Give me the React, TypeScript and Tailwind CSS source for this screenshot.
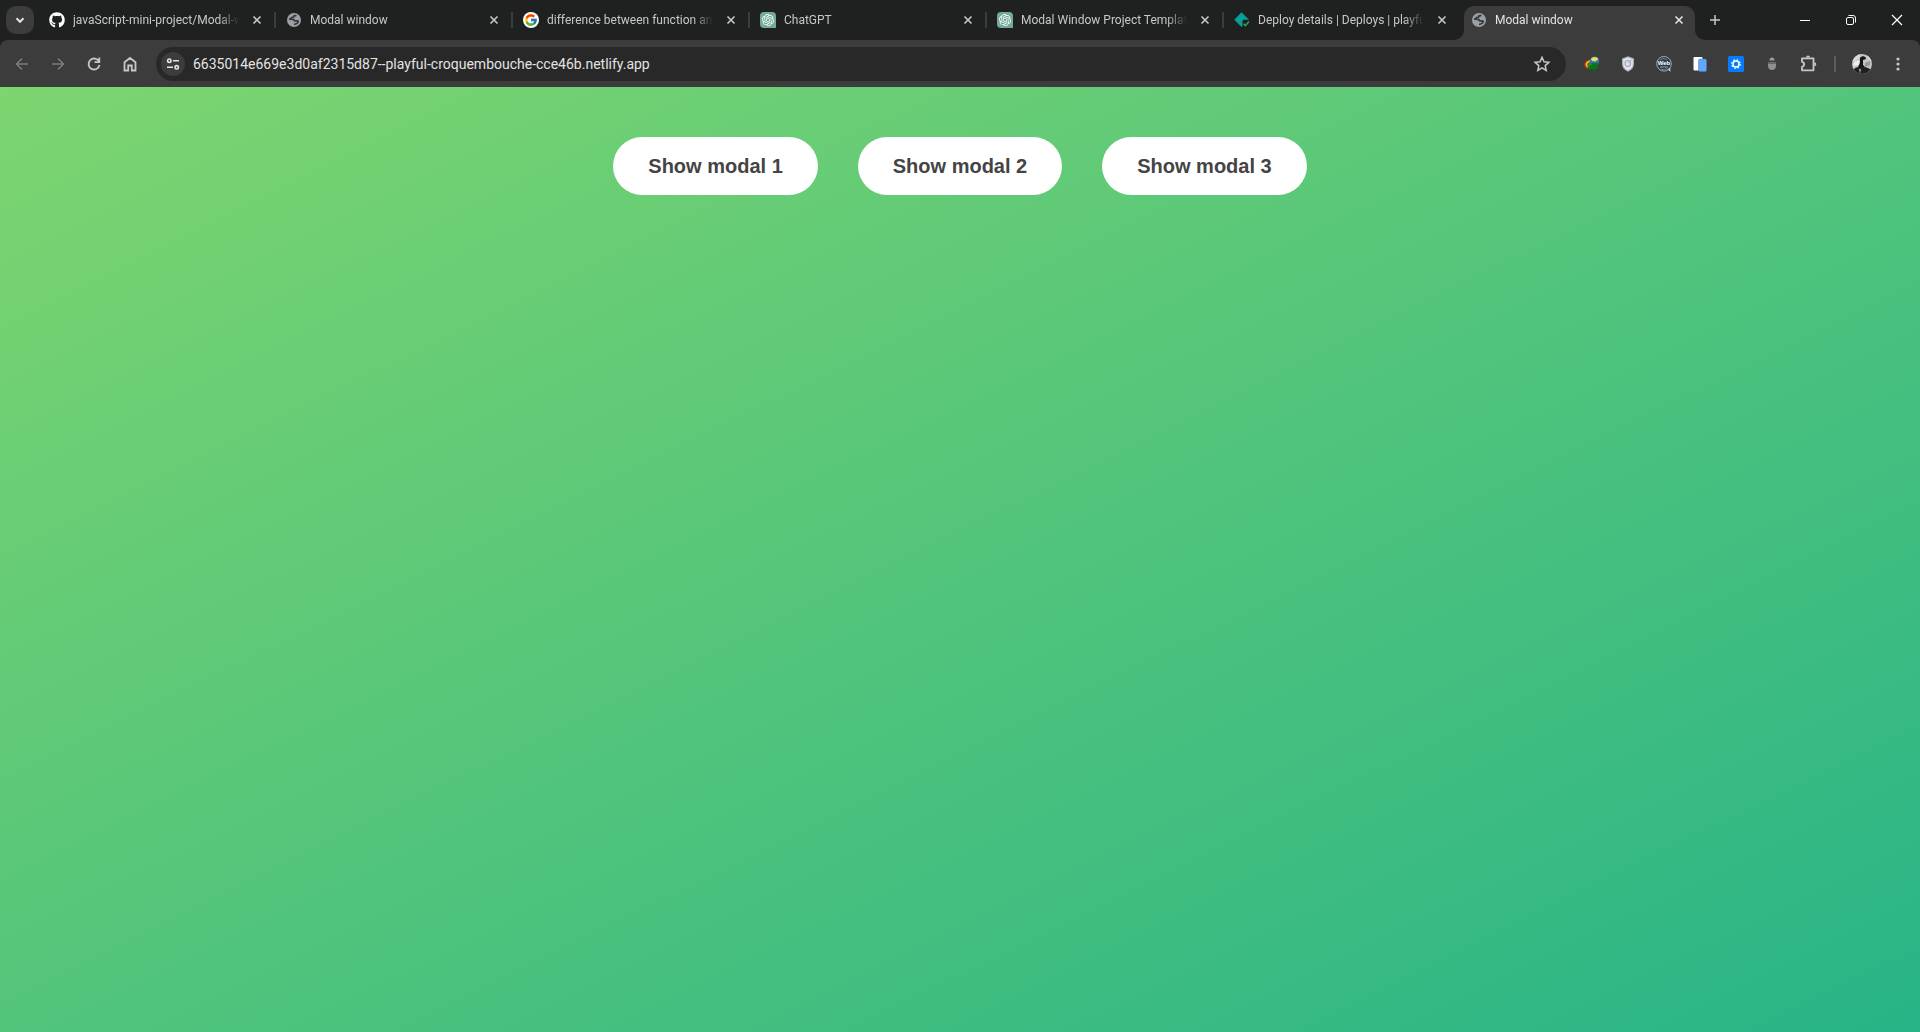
import { useState } from "react";
import type { ReactNode } from "react";
import { FaGithub } from "react-icons/fa";
import { FcGoogle } from "react-icons/fc";
import { SiOpenai } from "react-icons/si";

const Globe = () => (
  <svg viewBox="0 0 16 16" className="size-4 shrink-0" aria-hidden="true">
    <circle cx="8" cy="8" r="7" fill="#9aa0a6" />
    <path
      d="M10.500 3.800C8.500 3.300 7.300 4 7.400 5.300 5.500 5 4.800 6 5 7.200H3M5.500 7.500c2-.400 3 .300 3.200 1.500 1.300.200 3.300-.800 3.500.400.100 1.200-2 3-4.200 2.900"
      fill="none"
      stroke="#363737"
      strokeWidth="1.700"
    />
  </svg>
);

const GitHub = () => <FaGithub className="size-4 shrink-0 text-white" aria-hidden="true" />;

const Google = () => (
  <span className="flex size-4 shrink-0 items-center justify-center rounded-full bg-white">
    <FcGoogle className="size-3.5" aria-hidden="true" />
  </span>
);

const OpenAI = () => (
  <span className="flex size-4 shrink-0 items-center justify-center rounded-sm rounded-br-none bg-[#74aa9c]">
    <SiOpenai className="size-3 text-white" aria-hidden="true" />
  </span>
);

const Netlify = () => (
  <svg viewBox="0 0 16 16" className="size-4 shrink-0" aria-hidden="true">
    <path d="M7.500.300 15 7.800H9.500l-1 1v5L7.500 15 .300 7.800z" fill="#05a09c" />
    <path d="M9.600 11.700l1.800 2 3.600-4.200" fill="none" stroke="#2fa84f" strokeWidth="1.500" />
  </svg>
);

const Cross = () => (
  <svg viewBox="0 0 16 16" className="size-4" fill="none" stroke="currentColor" strokeWidth="1.600" aria-hidden="true">
    <path d="M4.500 4.500l7 7M11.500 4.500l-7 7" />
  </svg>
);

type TabData = { title: string; icon: ReactNode };

const tabs: TabData[] = [
  { title: "javaScript-mini-project/Modal-window", icon: <GitHub /> },
  { title: "Modal window", icon: <Globe /> },
  { title: "difference between function and", icon: <Google /> },
  { title: "ChatGPT", icon: <OpenAI /> },
  { title: "Modal Window Project Template", icon: <OpenAI /> },
  { title: "Deploy details | Deploys | playful", icon: <Netlify /> },
  { title: "Modal window", icon: <Globe /> },
];

const Flare = () => (
  <svg viewBox="0 0 10 10" className="size-2.5" aria-hidden="true">
    <path d="M10 0v10H0A10 10 0 0 0 10 0z" fill="#3c3c3c" />
  </svg>
);

function Tab({ tab, active, divider }: { tab: TabData; active: boolean; divider: boolean }) {
  return (
    <div className="relative flex min-w-0 flex-1 px-[3px] pt-1.5">
      <div
        className={
          active
            ? "relative flex min-w-0 flex-1 items-center rounded-t-[10px] bg-[#3c3c3c] pb-1.5 pl-[7px] pr-2 text-[#e3e3e3]"
            : "relative flex min-w-0 flex-1 items-center pb-1.5 pl-[7px] pr-2 text-[#c7c7c7]"
        }
      >
        {tab.icon}
        <button
          type="button"
          className="ml-2 min-w-0 flex-1 overflow-hidden whitespace-nowrap text-left text-xs leading-4 [mask-image:linear-gradient(to_right,#000_calc(100%_-_20px),transparent)]"
        >
          {tab.title}
        </button>
        <button type="button" aria-label="Close tab" className="ml-2.5">
          <Cross />
        </button>
        {active && (
          <>
            <span className="absolute bottom-0 -left-2.5">
              <Flare />
            </span>
            <span className="absolute bottom-0 -right-2.5 -scale-x-100">
              <Flare />
            </span>
          </>
        )}
      </div>
      {divider && <span className="absolute top-3 right-0 h-4 w-0.5 bg-[#3c3c3c]" />}
    </div>
  );
}

function TabStrip() {
  return (
    <div className="flex h-10 items-stretch bg-[#1f2120] pl-1.5">
      <button
        type="button"
        aria-label="Search tabs"
        className="mt-1.5 mr-[5px] flex size-7 items-center justify-center rounded-[10px] bg-[#3c3c3c] text-[#e3e3e3]"
      >
        <svg viewBox="0 0 16 16" className="size-4" fill="none" stroke="currentColor" strokeWidth="2" aria-hidden="true">
          <path d="M4.500 6.300 8 9.800l3.500-3.500" />
        </svg>
      </button>
      <div className="flex max-w-[1659px] min-w-0 flex-1">
        {tabs.map((tab, i) => (
          <Tab key={i} tab={tab} active={i === tabs.length - 1} divider={i < tabs.length - 2} />
        ))}
      </div>
      <button type="button" aria-label="New tab" className="ml-[3px] flex w-7 items-center justify-center text-[#c7c7c7]">
        <svg viewBox="0 0 16 16" className="size-4" fill="none" stroke="currentColor" strokeWidth="1.500" aria-hidden="true">
          <path d="M8 3v10M3 8h10" />
        </svg>
      </button>
      <div className="ml-auto flex text-white">
        <button type="button" aria-label="Minimize" className="flex w-[46px] items-center justify-center">
          <svg viewBox="0 0 12 12" className="size-3" fill="none" stroke="currentColor" aria-hidden="true">
            <path d="M1 6.500h10" />
          </svg>
        </button>
        <button type="button" aria-label="Restore" className="flex w-[46px] items-center justify-center">
          <svg viewBox="0 0 12 12" className="size-3" fill="none" stroke="currentColor" aria-hidden="true">
            <rect x="1.500" y="3.500" width="7" height="7" rx="1.500" />
            <path d="M3.500 1.500H8A2.500 2.500 0 0 1 10.500 4v4.500" />
          </svg>
        </button>
        <button type="button" aria-label="Close" className="flex w-[46px] items-center justify-center">
          <svg viewBox="0 0 12 12" className="size-3" fill="none" stroke="currentColor" strokeWidth="1.200" aria-hidden="true">
            <path d="M1 1l10 10M11 1 1 11" />
          </svg>
        </button>
      </div>
    </div>
  );
}

function IconButton({ label, dim, children }: { label: string; dim?: boolean; children: ReactNode }) {
  return (
    <button
      type="button"
      aria-label={label}
      className={
        dim
          ? "flex size-9 shrink-0 items-center justify-center text-[#7c7c7c]"
          : "flex size-9 shrink-0 items-center justify-center text-[#c7c7c7]"
      }
    >
      <svg viewBox="0 0 16 16" className="size-4 overflow-visible" fill="none" stroke="currentColor" strokeWidth="1.600" aria-hidden="true">
        {children}
      </svg>
    </button>
  );
}

function Extensions() {
  return (
    <div className="flex shrink-0 items-center">
      <IconButton label="Download manager">
        <g stroke="none">
          <path d="M7 3.500C2.500 3.500 0 6 .200 9l1.300 3 2 .800L8 8z" fill="#c9301c" />
          <path d="M7 4.600C3.500 4.600 1.500 6.500 1.600 9l1.700 2.800L8 8z" fill="#efc314" />
          <path d="M7 5.800C4.500 5.800 3.200 7.300 3.200 9.300L4.500 11.500 8 9z" fill="#2a8a2f" />
          <circle cx="10.500" cy="5.300" r="4.700" fill="#3a6db4" />
          <path d="M6.800 3.200C8.500.200 13 .200 14.400 3l-2.900 2.600-3.300-.600z" fill="#dfe069" />
          <path d="M3.500 11.500 8 8.500 7.500 7 16 7.300 12.800 10l1.700 1.500-5 3.500-.500-2-4.500.700z" fill="#0c7410" />
        </g>
      </IconButton>
      <IconButton label="Security shield">
        <g stroke="none">
          <path d="M8 .300 14 2.500v5c0 4-2.300 6.500-6 8.200-3.700-1.700-6-4.200-6-8.200v-5z" fill="#a9b0bb" />
          <path d="M8 1.500 12.800 3.300v4.400c0 3.100-1.700 5.200-4.800 6.700-3.100-1.500-4.800-3.600-4.800-6.700V3.300z" fill="#e2e5ea" />
        </g>
        <circle cx="7.800" cy="7.500" r="2.800" stroke="#a2a9b5" strokeWidth="1.200" />
        <path d="M8 7.500 12 3.500" stroke="#a2a9b5" strokeWidth="1" />
      </IconButton>
      <IconButton label="Web tools">
        <circle cx="8" cy="7.800" r="7.300" fill="#303b51" stroke="#a4a8b2" strokeWidth="1" />
        <path d="M11.500 13.500l3 2.200-.200-4z" fill="#c7c9ce" stroke="none" />
        <path d="M4 4 7 2.500l4 1M4.500 13l4 1 3-2" stroke="#5d8795" strokeWidth="1" />
        <text x="8" y="9" textAnchor="middle" fontSize="6" fontWeight="700" fill="#fff" stroke="none" fontFamily="Liberation Sans, sans-serif">
          Web
        </text>
        <path d="M4 11h8" stroke="#929aaa" strokeWidth="1" />
      </IconButton>
      <IconButton label="Reader">
        <g stroke="none">
          <rect x="1.500" y="1" width="9" height="13.500" rx="1" fill="#fff" />
          <rect x="6.500" y="3" width="8" height="12.500" rx="1.500" fill="#63a7fa" stroke="#3f7dcc" strokeWidth=".500" />
        </g>
      </IconButton>
      <IconButton label="Settings extension">
        <rect width="16" height="16" rx="1.500" fill="#087cff" stroke="none" />
        <circle cx="8" cy="8" r="3" stroke="#fff" strokeWidth="1.500" />
        <circle cx="8" cy="8" r="4.200" stroke="#fff" strokeWidth="1.300" strokeDasharray="1.700 1.599" />
      </IconButton>
      <IconButton label="Incognito helper">
        <g stroke="none">
          <path d="M5.500 4.500C5.500 2.300 6.500 1.500 8 1.500s2.500.800 2.500 3z" fill="#9b9b9b" />
          <path d="M4 6h8v3.500C12 12.500 10.500 14 8 14s-4-1.500-4-4.500z" fill="#8e8e8e" />
          <path d="M4 6h8v2H4z" fill="#686868" />
        </g>
      </IconButton>
      <IconButton label="Extensions">
        <path d="M2 2.300H13.500V14.300H2V10.800C4.800 10.300 4.800 6.300 2 5.800z" strokeWidth="1.800" strokeLinejoin="round" />
        <path d="M6 1.600a2 2 0 0 1 4 0zM14.300 6.300a2 2 0 0 1 0 4z" fill="currentColor" stroke="none" />
      </IconButton>
    </div>
  );
}

function Toolbar() {
  const [url, setUrl] = useState("6635014e669e3d0af2315d87--playful-croquembouche-cce46b.netlify.app");
  return (
    <div className="bg-[#1f2120]">
      <div className="flex h-[47px] items-center rounded-t-lg bg-[#3c3c3c] pl-1 pr-1">
        <IconButton label="Back" dim>
          <path d="M14 8H3M8 2.500 2.500 8 8 13.500" />
        </IconButton>
        <IconButton label="Forward" dim>
          <path d="M2 8h11M8 2.500 13.500 8 8 13.500" />
        </IconButton>
        <IconButton label="Reload">
          <path d="M13 5.500A5.500 5.500 0 1 0 13.500 9M13.300 1.500v4.700H8.500" strokeWidth="1.800" />
        </IconButton>
        <IconButton label="Home">
          <path d="M2.500 6.300 8 2l5.500 4.300v8.200H9.800v-5H6.200v5H2.500z" strokeWidth="1.800" />
        </IconButton>
        <div className="ml-2 flex h-[34px] min-w-0 flex-1 items-center rounded-full bg-[#282828] pl-[5px] pr-1.5">
          <button
            type="button"
            aria-label="View site information"
            className="flex size-6 shrink-0 items-center justify-center rounded-full bg-[#3c3c3c] text-[#e3e3e3]"
          >
            <svg viewBox="0 0 14 14" className="size-3.5" fill="none" stroke="currentColor" strokeWidth="1.600" aria-hidden="true">
              <circle cx="3.300" cy="3.700" r="1.700" />
              <path d="M7 3.700h6M1 10.300h6" />
              <circle cx="10.700" cy="10.300" r="1.700" />
            </svg>
          </button>
          <input
            type="text"
            aria-label="Address"
            value={url}
            onChange={(e) => setUrl(e.target.value)}
            className="ml-2 min-w-0 flex-1 bg-transparent text-sm leading-5 text-[#e3e3e3] outline-none"
          />
          <IconButton label="Bookmark this tab">
            <path d="M8 1.300 10 5.800l4.900.500-3.700 3.300 1 4.800L8 11.900l-4.200 2.500 1-4.800L1.100 6.300 6 5.800z" strokeWidth="1.500" />
          </IconButton>
        </div>
        <div className="w-2" />
        <Extensions />
        <span className="mx-2 h-4 w-0.5 shrink-0 bg-[#5c5c5c]" />
        <button type="button" aria-label="Profile" className="flex size-9 shrink-0 items-center justify-center">
          <svg viewBox="0 0 20 20" className="size-5 rounded-full" aria-hidden="true">
            <rect width="20" height="20" fill="#c4c4c4" />
            <path d="M0 0h9L6 5 0 8zM14 0h6v8l-4-3z" fill="#dcdcdc" />
            <path d="M2 8l5-2v5l-6 1z" fill="#eee" />
            <path d="M8 4c2-3 6-2 6 1l-3 1v5l2 2H6l2-4z" fill="#151515" />
            <path d="M2 15c3-3 11-3 16 0l-1 5H3z" fill="#202020" />
            <path d="M7 15l1 5 1-5z" fill="#a8a8a8" />
            <path d="M13 9l5-2v4l-5 2z" fill="#999" />
          </svg>
        </button>
        <IconButton label="Menu">
          <g fill="currentColor" stroke="none">
            <circle cx="8" cy="3" r="1.600" />
            <circle cx="8" cy="8" r="1.600" />
            <circle cx="8" cy="13" r="1.600" />
          </g>
        </IconButton>
      </div>
    </div>
  );
}

export default function App() {
  return (
    <div className="flex min-h-screen flex-col font-[Roboto,'Noto_Sans',sans-serif]">
      <header>
        <TabStrip />
        <Toolbar />
      </header>
      <main className="flex flex-1 items-start justify-center gap-10 bg-linear-to-tl from-[#28b487] to-[#7dd56f] [--tw-gradient-position:to_top_left] pt-[50px]">
        {[1, 2, 3].map((n) => (
          <button
            key={n}
            type="button"
            className="rounded-full bg-white px-[35px] py-[17px] font-['Liberation_Sans',sans-serif] text-xl leading-6 font-semibold text-[#444]"
          >
            Show modal {n}
          </button>
        ))}
      </main>
    </div>
  );
}
